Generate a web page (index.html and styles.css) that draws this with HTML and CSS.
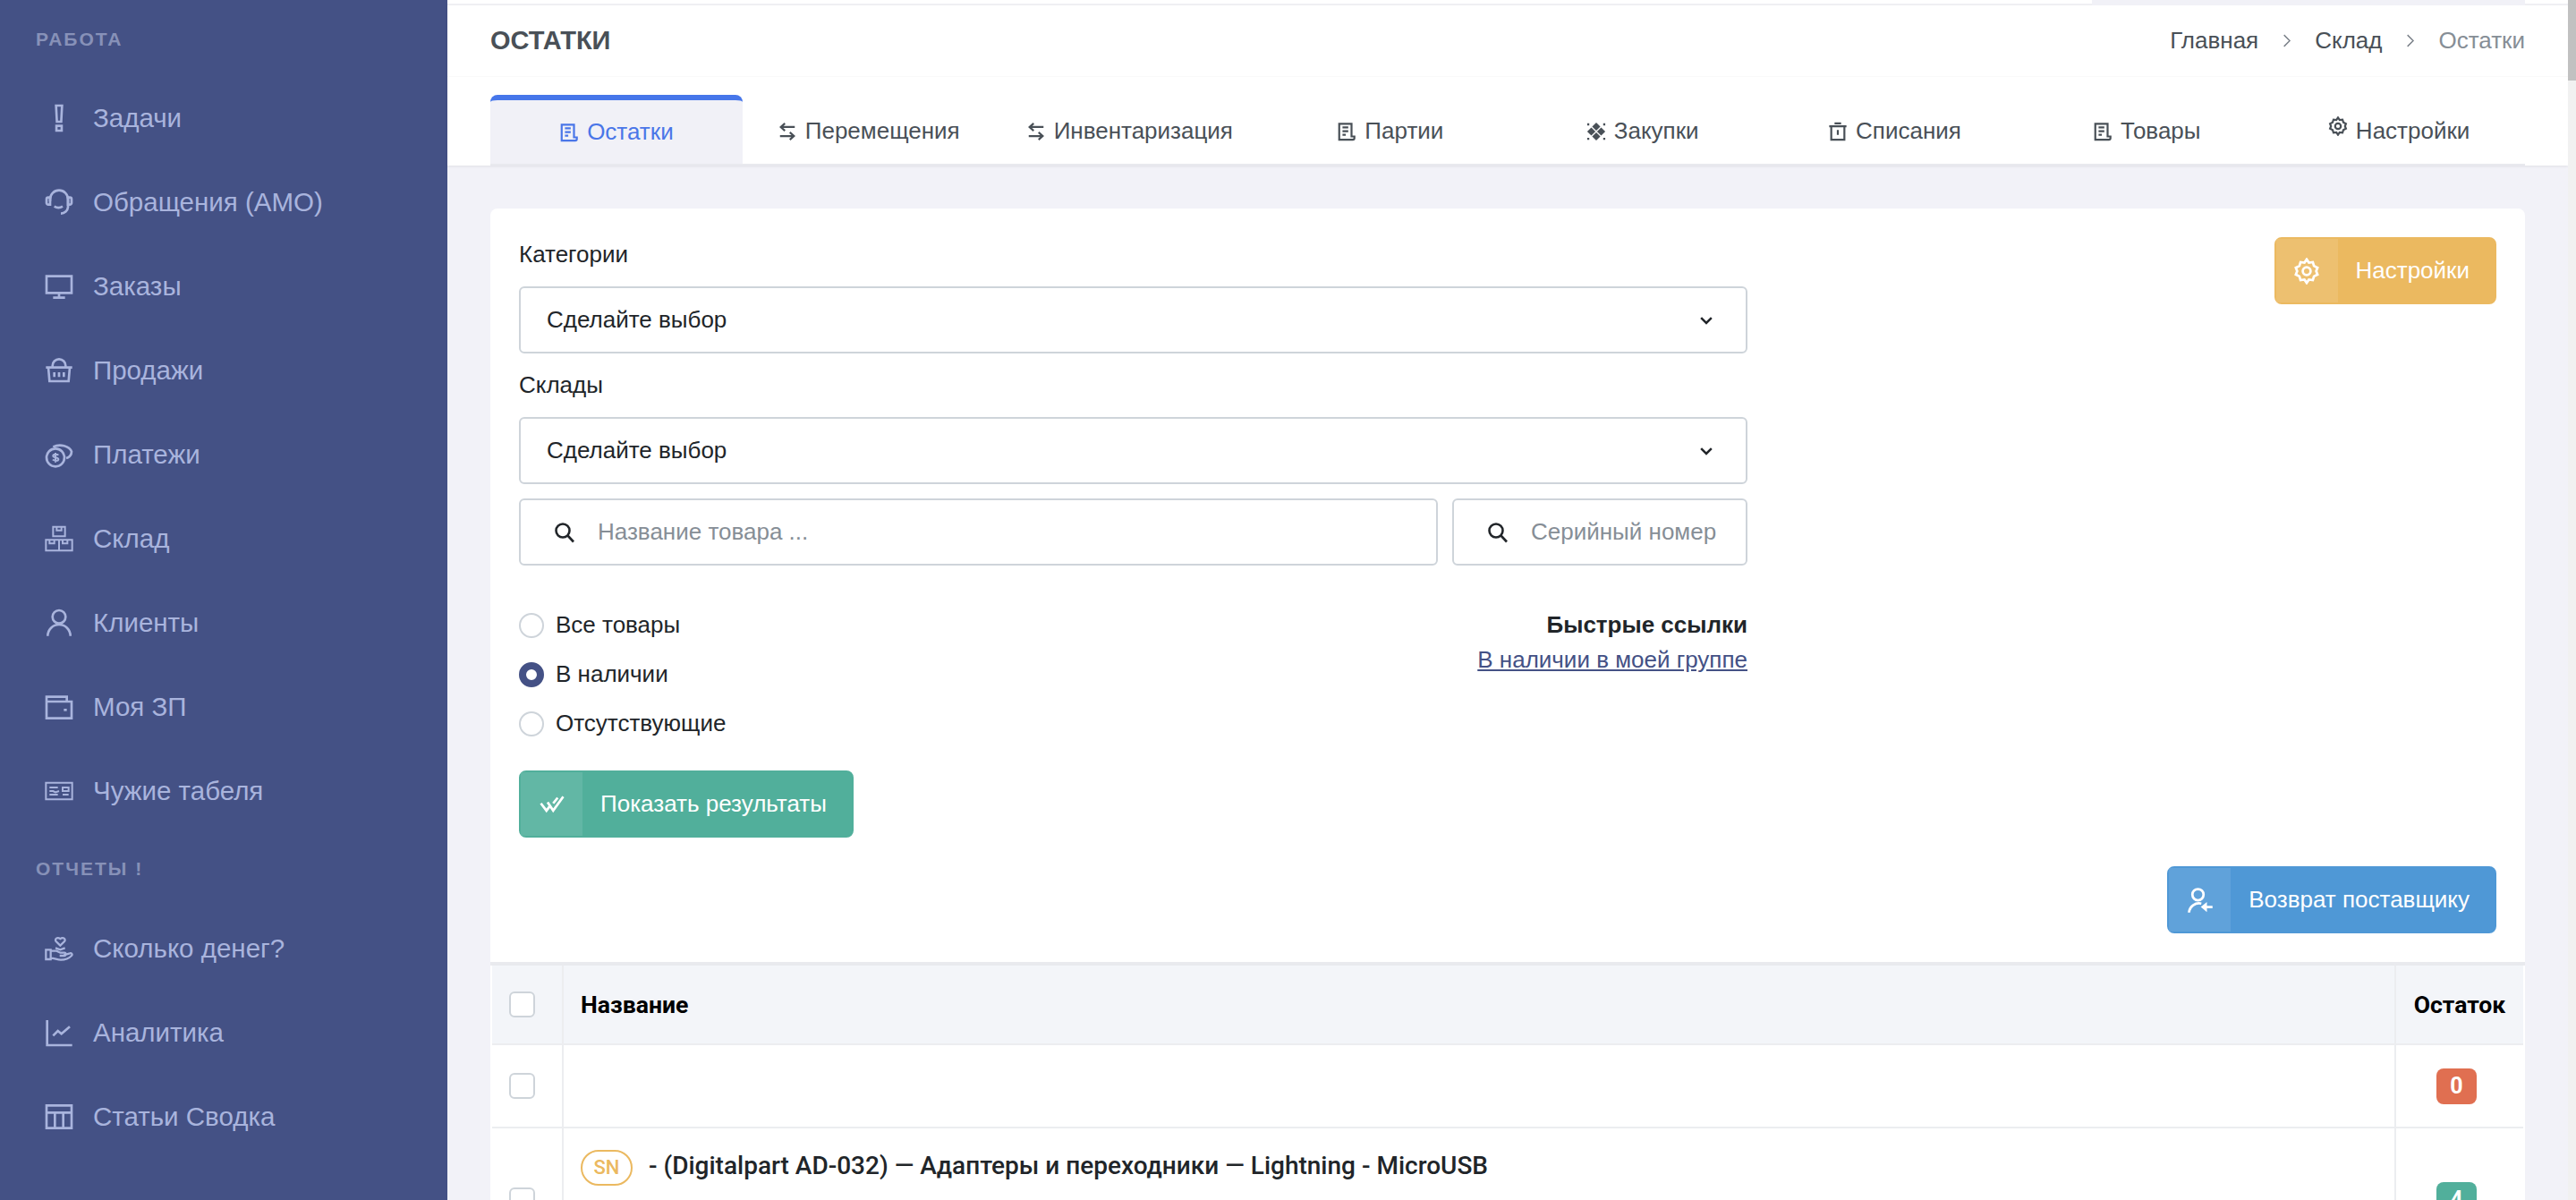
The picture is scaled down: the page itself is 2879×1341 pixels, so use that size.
FILE: index.html
```html
<!DOCTYPE html>
<html lang="ru">
<head>
    <meta charset="UTF-8">
    <title>Остатки</title>
    <link rel="stylesheet" href="styles.css">
</head>
<body>
    <svg class="icon-defs" xmlns="http://www.w3.org/2000/svg">
        <defs>
            <symbol id="i-alert" viewBox="0 0 24 24"><path d="M9.500 1.500h5l-.7 13.500h-3.600zM9.800 18.500h4.400v4H9.800z"/></symbol>
            <symbol id="i-headset" viewBox="0 0 24 24"><path d="M4.500 11V9.500a7.500 7.500 0 0 1 15 0V16a6 6 0 0 1-6 5.500"/><path d="M4.500 8H3a1.500 1.500 0 0 0-1.500 1.500v3A1.500 1.500 0 0 0 3 14h1.500zM19.500 8H21a1.500 1.500 0 0 1 1.500 1.500v3A1.500 1.500 0 0 1 21 14h-1.500zM8 15.500c2 1.300 5 1.300 7 0"/></symbol>
            <symbol id="i-monitor" viewBox="0 0 24 24"><path d="M1.500 3.500h21v14h-21zM12 17.500v4M7 21.500h10"/></symbol>
            <symbol id="i-basket" viewBox="0 0 24 24"><path d="M6.500 9.500V8a5.500 5.500 0 0 1 11 0v1.500M1 9.500h22M3 9.500l1 11.500h16l1-11.500M8 13.500v4M12 13.500v4M16 13.500v4"/></symbol>
            <symbol id="i-coins" viewBox="0 0 24 24"><circle cx="9" cy="14.500" r="7.500"/><path d="M7 5.500A10 7 0 0 1 22.500 9.500a6 6 0 0 1-4.500 5.500"/><path stroke-width="1.500" d="M11.500 12.500c-1-1-4.500-1-4.500.6 0 1.800 4.500.8 4.500 2.800 0 1.600-3.500 1.500-4.800.3M9 10.500v8"/></symbol>
            <symbol id="i-boxes" viewBox="0 0 24 24"><path stroke-width="1.500" d="M7 2h10v8H7zM1 13h11v9H1zM12 13h11v9H12zM10 2v3h4V2M4 13v3h4v-3M15 13v3h4v-3"/></symbol>
            <symbol id="i-user" viewBox="0 0 24 24"><circle cx="12" cy="7" r="5.500"/><path d="M2.500 23a9.500 9.500 0 0 1 19 0"/></symbol>
            <symbol id="i-wallet" viewBox="0 0 24 24"><path d="M1.500 7.500h21v14h-21zM1.500 7.500v-4h17v4"/><path d="M16 14.500h2.500"/></symbol>
            <symbol id="i-card" viewBox="0 0 24 24"><path stroke-width="1.500" d="M1 5h22v14H1zM4 9h7M4 12h3l2 1 3-1M4 15h7M15 9h5v3h-5zM15 15h5"/></symbol>
            <symbol id="i-hand" viewBox="0 0 24 24"><path stroke-width="1.700" d="M1 13h4v8H1zM5 14h5l3 1.500h3.500c1.500 0 1.500 2.500 0 2.500h-4M16 17.500l5-1.500c1.500-.5 2.500 1 1.500 2-2 2-6 3.500-9 3.500-3 0-5.500-1.500-8.500-1.500M13 9.500L9.500 6c-1.500-2 1-4 3.500-2.200 2.500-1.800 5 .2 3.500 2.200zM9 11.500l4 1.500 4-1.500"/></symbol>
            <symbol id="i-chart" viewBox="0 0 24 24"><path d="M2 1.500v21h21M7 14.500l4-4 3 2.500 7-6"/></symbol>
            <symbol id="i-table" viewBox="0 0 24 24"><path d="M1.500 2.500h21v19h-21zM1.500 8.500h21M8.500 8.500v13M15.500 8.500v13"/></symbol>
            <symbol id="i-doc" viewBox="0 0 24 24"><path d="M18 18V2.500H3V22h16.500a2 2 0 0 0 2-2v-2H18zM7 7h7M7 11.500h7M7 16h4"/></symbol>
            <symbol id="i-swap" viewBox="0 0 24 24"><path d="M21 6.500H4M9 2L4 6.500 9 11M3 17.500h17M15 13l5 4.500-5 4.500"/></symbol>
            <symbol id="i-gear" viewBox="0 0 24 24"><path d="M12 1.500l2 3 3.500-.5 1 3.300 3.200 1.700-1.200 3 1.200 3-3.200 1.700-1 3.300-3.500-.5-2 3-2-3-3.500.5-1-3.300L2.300 15l1.200-3-1.200-3 3.200-1.700 1-3.300 3.500.5z"/><circle cx="12" cy="12" r="3.500"/></symbol>
            <symbol id="i-trash" viewBox="0 0 24 24"><path d="M1.500 5.500h21M4 5.500v16.500h16V5.500M8 2h8M12 10v6"/></symbol>
            <symbol id="i-search" viewBox="0 0 24 24"><circle cx="10" cy="10" r="7.500"/><path d="M15.500 15.500L22 22.500"/></symbol>
            <symbol id="i-chevron" viewBox="0 0 24 24"><path d="M5 8.500l7 7 7-7"/></symbol>
            <symbol id="i-crumb" viewBox="0 0 24 24"><path d="M8 3l9 9-9 9"/></symbol>
            <symbol id="i-checks" viewBox="0 0 24 24"><path d="M2 11l5 6.500 3-4M8 10l5 7.500L22 5M13 11l4-5"/></symbol>
            <symbol id="i-return" viewBox="0 0 24 24"><circle cx="10" cy="7" r="5"/><path d="M2 23a9 9 0 0 1 11-8M23 18h-6"/><path class="solid" d="M18 13.500v9L12.500 18z"/></symbol>
        </defs>
    </svg>

    <div class="layout">
        <aside class="sidebar">
            <div class="menu-title">РАБОТА</div>
            <a class="menu-item"><svg class="icon menu-icon"><use href="#i-alert"/></svg>Задачи</a>
            <a class="menu-item"><svg class="icon menu-icon"><use href="#i-headset"/></svg>Обращения (АМО)</a>
            <a class="menu-item"><svg class="icon menu-icon"><use href="#i-monitor"/></svg>Заказы</a>
            <a class="menu-item"><svg class="icon menu-icon"><use href="#i-basket"/></svg>Продажи</a>
            <a class="menu-item"><svg class="icon menu-icon"><use href="#i-coins"/></svg>Платежи</a>
            <a class="menu-item"><svg class="icon menu-icon"><use href="#i-boxes"/></svg>Склад</a>
            <a class="menu-item"><svg class="icon menu-icon"><use href="#i-user"/></svg>Клиенты</a>
            <a class="menu-item"><svg class="icon menu-icon"><use href="#i-wallet"/></svg>Моя ЗП</a>
            <a class="menu-item"><svg class="icon menu-icon"><use href="#i-card"/></svg>Чужие табеля</a>
            <div class="menu-title menu-title-second">ОТЧЕТЫ !</div>
            <a class="menu-item"><svg class="icon menu-icon"><use href="#i-hand"/></svg>Сколько денег?</a>
            <a class="menu-item"><svg class="icon menu-icon"><use href="#i-chart"/></svg>Аналитика</a>
            <a class="menu-item"><svg class="icon menu-icon"><use href="#i-table"/></svg>Статьи Сводка</a>
        </aside>

        <div class="main">
            <div class="topbar"><div class="topbar-block"></div></div>

            <header class="page-header">
                <div class="title-row">
                    <h1 class="page-title">ОСТАТКИ</h1>
                    <nav class="breadcrumb">
                        <a>Главная</a>
                        <svg class="icon crumb-sep"><use href="#i-crumb"/></svg>
                        <a>Склад</a>
                        <svg class="icon crumb-sep"><use href="#i-crumb"/></svg>
                        <span class="crumb-current">Остатки</span>
                    </nav>
                </div>
                <div class="tabs">
                    <a class="tab active"><svg class="icon tab-icon"><use href="#i-doc"/></svg>Остатки</a>
                    <a class="tab"><svg class="icon tab-icon"><use href="#i-swap"/></svg>Перемещения</a>
                    <a class="tab"><svg class="icon tab-icon"><use href="#i-swap"/></svg>Инвентаризация</a>
                    <a class="tab"><svg class="icon tab-icon"><use href="#i-doc"/></svg>Партии</a>
                    <a class="tab">
                        <svg class="tab-icon diamonds" viewBox="0 0 24 24"><path d="M12 1l5 5-5 5-5-5zM6 7l5 5-5 5-5-5zM18 7l5 5-5 5-5-5zM12 13l5 5-5 5-5-5zM1 2h2.500v2.500H1zM20.500 2H23v2.500h-2.500zM1 19.500h2.500V22H1zM20.500 19.500H23V22h-2.500z"/></svg>Закупки
                    </a>
                    <a class="tab"><svg class="icon tab-icon"><use href="#i-trash"/></svg>Списания</a>
                    <a class="tab"><svg class="icon tab-icon"><use href="#i-doc"/></svg>Товары</a>
                    <a class="tab"><svg class="icon tab-icon tab-icon-raised"><use href="#i-gear"/></svg>Настройки</a>
                </div>
            </header>

            <section class="card">
                <div class="filters">
                    <div class="filters-form">
                        <label class="field-label">Категории</label>
                        <div class="select">Сделайте выбор<svg class="icon select-arrow"><use href="#i-chevron"/></svg></div>
                        <label class="field-label field-label-second">Склады</label>
                        <div class="select">Сделайте выбор<svg class="icon select-arrow"><use href="#i-chevron"/></svg></div>

                        <div class="search-row">
                            <div class="search search-name">
                                <svg class="icon search-icon"><use href="#i-search"/></svg>
                                <input type="text" placeholder="Название товара ...">
                            </div>
                            <div class="search search-serial">
                                <svg class="icon search-icon"><use href="#i-search"/></svg>
                                <input type="text" placeholder="Серийный номер">
                            </div>
                        </div>

                        <div class="options-row">
                            <div class="radios">
                                <label class="radio"><input type="radio" name="stock">Все товары</label>
                                <label class="radio"><input type="radio" name="stock" checked>В наличии</label>
                                <label class="radio"><input type="radio" name="stock">Отсутствующие</label>
                            </div>
                            <div class="quick-links">
                                <b>Быстрые ссылки</b>
                                <a href="#">В наличии в моей группе</a>
                            </div>
                        </div>

                        <button class="btn btn-green">
                            <span class="btn-icon"><svg class="icon"><use href="#i-checks"/></svg></span>
                            <span class="btn-text">Показать результаты</span>
                        </button>
                    </div>

                    <button class="btn btn-yellow">
                        <span class="btn-icon"><svg class="icon"><use href="#i-gear"/></svg></span>
                        <span class="btn-text">Настройки</span>
                    </button>
                </div>

                <div class="actions">
                    <button class="btn btn-blue">
                        <span class="btn-icon"><svg class="icon"><use href="#i-return"/></svg></span>
                        <span class="btn-text">Возврат поставщику</span>
                    </button>
                </div>

                <div class="table-wrap">
                    <table class="stock-table">
                        <thead>
                            <tr>
                                <th class="col-check"><input class="check" type="checkbox"></th>
                                <th class="col-name">Название</th>
                                <th class="col-rest">Остаток</th>
                            </tr>
                        </thead>
                        <tbody>
                            <tr class="row-empty">
                                <td class="col-check"><input class="check" type="checkbox"></td>
                                <td class="col-name"></td>
                                <td class="col-rest"><span class="count count-zero">0</span></td>
                            </tr>
                            <tr class="row-item">
                                <td class="col-check"><input class="check" type="checkbox"></td>
                                <td class="col-name"><span class="sn">SN</span><span class="item-name">- (Digitalpart AD-032) — Адаптеры и переходники — Lightning - MicroUSB</span></td>
                                <td class="col-rest"><span class="count count-some">4</span></td>
                            </tr>
                        </tbody>
                    </table>
                </div>
            </section>
        </div>

        <div class="scrollbar"><div class="scrollbar-thumb"></div></div>
    </div>
</body>
</html>
```

FILE: styles.css
```css
html, body {
    margin: 0;
    height: 100%;
    overflow: hidden;
}

body {
    font-family: "Liberation Sans", Arial, sans-serif;
    font-size: 26px;
    color: #212529;
    background-color: #f2f2f8;
}

.icon-defs {
    width: 0;
    height: 0;
    position: absolute;
}

.icon {
    fill: none;
    stroke: currentColor;
    stroke-width: 2;
}

.solid {
    fill: currentColor;
    stroke: none;
}

.layout {
    display: flex;
    height: 1341px;
    overflow: hidden;
}

/* sidebar */
.sidebar {
    flex: 0 0 500px;
    box-sizing: border-box;
    padding-top: 30px;
    background-color: #445185;
    color: #a9b4dd;
}

.menu-title {
    height: 28px;
    line-height: 28px;
    margin: 0 0 27px 40px;
    font-size: 21px;
    font-weight: bold;
    letter-spacing: 2px;
    color: #8791b8;
}

.menu-title-second {
    margin-top: 26px;
    margin-bottom: 28px;
}

.menu-item {
    display: flex;
    align-items: center;
    height: 94px;
    padding-left: 50px;
    font-size: 29.500px;
}

.menu-icon {
    width: 32px;
    height: 32px;
    margin-right: 22px;
}

/* main */
.main {
    flex: 1;
    min-width: 0;
}

.topbar {
    display: flex;
    justify-content: flex-end;
    height: 4px;
    padding-right: 48px;
    background-color: #fff;
    border-bottom: 2px solid #f1f1f5;
}

.topbar-block {
    width: 484px;
    height: 6px;
    background-color: #f1f1f7;
}

.page-header {
    background-color: #fff;
    padding: 0 48px;
    box-shadow: 0 1px 3px rgba(0,0,0,0.08);
}

.title-row {
    display: flex;
    align-items: center;
    justify-content: space-between;
    height: 79px;
    border-bottom: 1px solid #fafafa;
    margin: 0 -48px;
    padding: 0 48px;
}

.page-title {
    margin: 0;
    font-size: 29px;
    font-weight: bold;
    color: #495057;
}

.breadcrumb {
    display: flex;
    align-items: center;
    color: #495057;
}

.crumb-sep {
    width: 17px;
    height: 17px;
    margin: 0 23px;
    color: #7b8189;
}

.crumb-current {
    color: #868e96;
}

.tabs {
    display: flex;
    height: 77px;
    margin-top: 20px;
    border-bottom: 2px solid #e8e9ee;
}

.tab {
    flex: 1 1 0;
    display: flex;
    align-items: center;
    justify-content: center;
    padding: 4px 35px 0;
    white-space: nowrap;
    color: #495057;
    border-radius: 8px 8px 0 0;
}

.tab.active {
    color: #4a76e8;
    background-color: #f1f1f7;
    border-top: 6px solid #4676ea;
    padding-top: 0;
}

.tab-icon {
    flex: none;
    width: 22px;
    height: 22px;
    margin-right: 9px;
    stroke-width: 2.400;
}

.tab-icon-raised {
    margin-top: -12px;
}

.diamonds {
    fill: #495057;
}

/* card */
.card {
    margin: 48px 48px 0;
    background-color: #fff;
    border-radius: 8px 8px 0 0;
}

.filters {
    display: flex;
    justify-content: space-between;
    padding: 32px 32px 0;
}

.filters-form {
    width: 1373px;
}

.field-label {
    display: block;
    height: 36px;
    line-height: 38px;
    margin-bottom: 19px;
}

.field-label-second {
    margin-top: 17px;
    margin-bottom: 18px;
    line-height: 36px;
}

.select {
    display: flex;
    align-items: center;
    justify-content: space-between;
    box-sizing: border-box;
    height: 75px;
    padding: 0 34px 0 29px;
    border: 2px solid #ced4da;
    border-radius: 6px;
}

.select-arrow {
    width: 20px;
    height: 20px;
    stroke-width: 3;
}

.search-row {
    display: flex;
    gap: 16px;
    margin-top: 16px;
}

.search {
    display: flex;
    align-items: center;
    box-sizing: border-box;
    min-width: 0;
    height: 75px;
    border: 2px solid #ced4da;
    border-radius: 6px;
}

.search-name {
    flex: 1;
}

.search-serial {
    flex: 0 0 330px;
}

.search-icon {
    flex: none;
    width: 24px;
    height: 24px;
    margin: 0 25px 0 37px;
    stroke-width: 2.600;
}

.search input {
    flex: 1;
    min-width: 0;
    border: none;
    outline: none;
    padding: 0;
    font: inherit;
    color: #212529;
}

.search input::placeholder {
    color: #868e96;
}

.options-row {
    display: flex;
    justify-content: space-between;
    margin-top: 39px;
}

.radio {
    display: flex;
    align-items: center;
    height: 55px;
}

.radio input {
    appearance: none;
    box-sizing: border-box;
    width: 28px;
    height: 28px;
    margin: 0 13px 0 0;
    background: #fff;
    border: 2px solid #ced4da;
    border-radius: 50%;
}

.radio input:checked {
    border: 8px solid #445185;
}

.quick-links {
    display: flex;
    flex-direction: column;
    align-items: flex-end;
    padding-top: 8px;
    line-height: 39px;
}

.quick-links a {
    color: #445185;
}

/* buttons */
.btn {
    display: inline-flex;
    align-items: stretch;
    height: 75px;
    padding: 0;
    border: 2px solid;
    border-radius: 8px;
    font: inherit;
    color: #fff;
}

.btn-icon {
    display: flex;
    align-items: center;
    justify-content: center;
    width: 69px;
    background-color: rgba(255,255,255,0.1);
}

.btn-icon svg {
    width: 30px;
    height: 30px;
    stroke-width: 2.200;
}

.btn-text {
    align-self: center;
    margin: 0 28px 0 20px;
}

.btn-green {
    margin-top: 25px;
    background-color: #51af9b;
    border-color: #51af9b;
}

.btn-yellow {
    background-color: #ebb960;
    border-color: #ebb960;
}

.btn-blue {
    background-color: #4f98d6;
    border-color: #4f98d6;
}

.actions {
    display: flex;
    justify-content: flex-end;
    padding: 32px 32px;
}

/* table */
.table-wrap {
    border-top: 4px solid #e9eaee;
    padding: 0 2px;
}

.stock-table {
    width: 100%;
    border-collapse: separate;
    border-spacing: 0;
    font-family: Roboto, "Liberation Sans", sans-serif;
}

.stock-table th,
.stock-table td {
    box-sizing: border-box;
    padding: 0;
    border-bottom: 2px solid #ecedf0;
    vertical-align: middle;
}

.stock-table thead tr {
    height: 89px;
    background-color: #f3f5f9;
    color: #000;
}

.stock-table th {
    font-size: 26.600px;
    font-weight: 700;
}

.col-check {
    width: 80px;
    text-align: center;
    border-right: 2px solid #ecedf0;
}

.stock-table .col-name {
    padding-left: 19px;
    text-align: left;
}

.col-rest {
    width: 144px;
    text-align: center;
    border-left: 2px solid #ecedf0;
}

.check {
    appearance: none;
    display: block;
    box-sizing: border-box;
    width: 29px;
    height: 29px;
    margin: 0 0 0 19px;
    background: #fff;
    border: 2px solid #ced4da;
    border-radius: 6px;
}

.row-empty {
    height: 93px;
}

.row-item {
    height: 162px;
}

.stock-table .row-item .col-name {
    vertical-align: top;
    padding-top: 24px;
}

.sn {
    display: inline-block;
    box-sizing: border-box;
    width: 58px;
    height: 40px;
    margin-right: 18px;
    line-height: 36px;
    text-align: center;
    font-size: 22px;
    font-weight: 500;
    color: #ebb960;
    border: 2px solid #ebb960;
    border-radius: 20px;
}

.item-name {
    font-size: 28px;
    font-weight: 500;
}

.count {
    display: inline-block;
    width: 45px;
    height: 40px;
    margin-right: 7px;
    line-height: 40px;
    font-size: 25px;
    font-weight: 700;
    color: #fff;
    border-radius: 8px;
}

.count-zero {
    background-color: #e06f51;
}

.count-some {
    background-color: #51af9b;
}

.scrollbar {
    flex: 0 0 9px;
    background-color: #f1f1f1;
}

.scrollbar-thumb {
    height: 90px;
    background-color: #c1c1c1;
}
```
